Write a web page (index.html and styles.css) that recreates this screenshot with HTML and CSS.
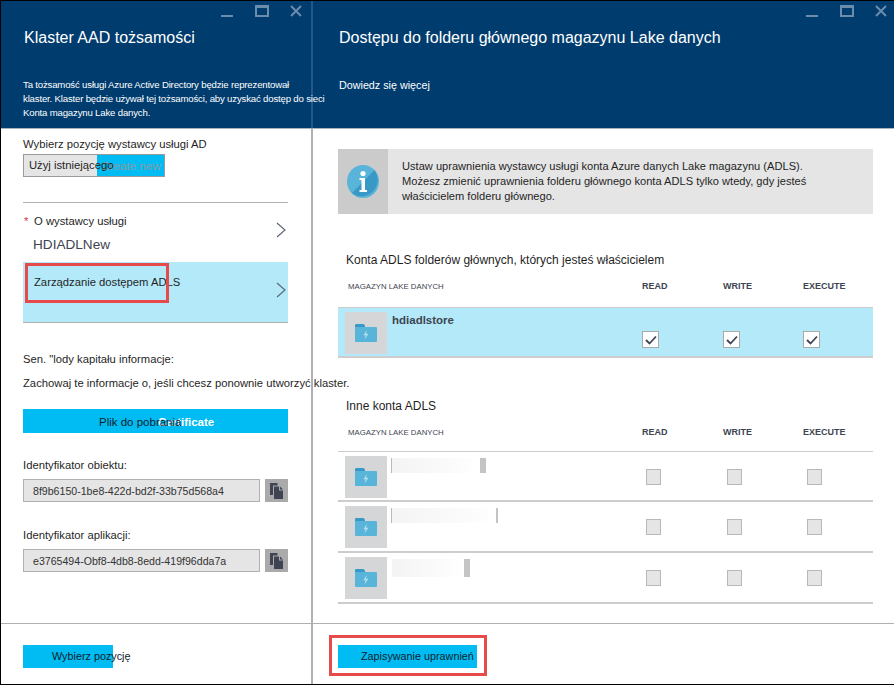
FILE: index.html
```html
<!DOCTYPE html>
<html lang="pl">

<head>
  <meta charset="UTF-8" />
  <title>Dostęp do folderu głównego</title>
  <link rel="stylesheet" href="styles.css">
</head>

<body>
  <svg class="defs" width="0" height="0" aria-hidden="true">
    <symbol id="folder" viewBox="0 0 22 18">
      <path d="M0 3V1.2Q0 0 1.2 0H8.5L10 1.5V3Z" fill="#3999c6" />
      <path d="M0 3H21Q22 3 22 4V17Q22 18 21 18H1Q0 18 0 17Z" fill="#59b4d9" />
      <path d="M11.8 6L8.4 11.3H10.6L9.6 15.5L13.4 9.8H11Z" fill="#b3def0" />
    </symbol>
    <symbol id="copy" viewBox="0 0 14 16">
      <path d="M0 0H7.5V2.5H3V12H0Z" fill="#3e4451" />
      <path d="M4 3.5H9V7.5H13V16H4Z" fill="#3e4451" />
      <path d="M10 3.5L13 6.5H10Z" fill="#3e4451" />
    </symbol>
    <symbol id="chevron" viewBox="0 0 10 16">
      <path d="M1 1L9 8L1 15" fill="none" stroke="#5a6472" stroke-width="1.1" />
    </symbol>
    <symbol id="tick" viewBox="0 0 12 10">
      <path d="M1 5L4.5 8.5L11 1.5" fill="none" stroke="#3e4451" stroke-width="1.8" />
    </symbol>
    <symbol id="close" viewBox="0 0 12 12">
      <path d="M1 1L11 11M11 1L1 11" fill="none" stroke="#6b8cab" stroke-width="2" />
    </symbol>
  </svg>

  <div class="frame">
    <section class="blade blade-left">
      <header class="blade-head">
        <div class="win-controls">
          <span class="win-min"></span>
          <span class="win-max"></span>
          <svg class="win-close"><use href="#close" /></svg>
        </div>
        <h1>Klaster AAD tożsamości</h1>
        <p class="head-note">Ta tożsamość usługi Azure Active Directory będzie reprezentował<br>klaster. Klaster będzie używał tej tożsamości, aby uzyskać dostęp do sieci<br>Konta magazynu Lake danych.</p>
      </header>
      <div class="blade-body">
        <p class="label label-first">Wybierz pozycję wystawcy usługi AD</p>
        <div class="toggle">
          <span class="toggle-on"><span class="toggle-text">Użyj istniejącego</span></span>
          <span class="toggle-off">Create new</span>
        </div>

        <div class="nav-row nav-first">
          <div>
            <p class="label"><span class="req">*</span>O wystawcy usługi</p>
            <p class="nav-value">HDIADLNew</p>
          </div>
          <svg class="chevron"><use href="#chevron" /></svg>
        </div>
        <div class="nav-row nav-active">
          <p class="label">Zarządzanie dostępem ADLS</p>
          <svg class="chevron"><use href="#chevron" /></svg>
          <span class="red-box red-adls"></span>
        </div>

        <p class="label secret-title">Sen. "lody kapitału informacje:</p>
        <p class="label secret-note">Zachowaj te informacje o, jeśli chcesz ponownie utworzyć klaster.</p>
        <div class="download">
          <span class="download-text">Plik do pobrania</span>
          <span class="download-cert">Certificate</span>
        </div>

        <p class="label id-label">Identyfikator obiektu:</p>
        <div class="id-row">
          <div class="id-value">8f9b6150-1be8-422d-bd2f-33b75d568a4</div>
          <button class="copy-btn"><svg><use href="#copy" /></svg></button>
        </div>
        <p class="label id-label id-second">Identyfikator aplikacji:</p>
        <div class="id-row">
          <div class="id-value">e3765494-Obf8-4db8-8edd-419f96dda7a</div>
          <button class="copy-btn"><svg><use href="#copy" /></svg></button>
        </div>
      </div>
      <footer class="blade-foot">
        <div class="action action-select">Wybierz pozycję</div>
      </footer>
    </section>

    <section class="blade blade-right">
      <header class="blade-head">
        <div class="win-controls">
          <span class="win-min"></span>
          <span class="win-max"></span>
          <svg class="win-close"><use href="#close" /></svg>
        </div>
        <h1>Dostępu do folderu głównego magazynu Lake danych</h1>
        <p class="head-note">Dowiedz się więcej</p>
      </header>
      <div class="blade-body">
        <div class="info">
          <div class="info-icon">
            <svg width="32" height="33" viewBox="0 0 32 33">
              <ellipse cx="16" cy="16.5" rx="16" ry="16.5" fill="#59b4d9" />
              <path d="M27.5 5A16 16.5 0 0 1 5 28Z" fill="#3999c6" />
              <circle cx="16" cy="8.5" r="2.6" fill="#fff" />
              <path d="M12.5 13H18V25H20V27H12.5V25H14.5V15H12.5Z" fill="#fff" />
            </svg>
          </div>
          <p>Ustaw uprawnienia wystawcy usługi konta Azure danych Lake magazynu (ADLS).<br>Możesz zmienić uprawnienia folderu głównego konta ADLS tylko wtedy, gdy jesteś<br>właścicielem folderu głównego.</p>
        </div>

        <h2 class="list-title">Konta ADLS folderów głównych, których jesteś właścicielem</h2>
        <div class="list-head">
          <span class="col-store">MAGAZYN LAKE DANYCH</span>
          <span>READ</span>
          <span>WRITE</span>
          <span>EXECUTE</span>
        </div>
        <div class="list-row row-active">
          <div class="store">
            <span class="thumb"><svg><use href="#folder" /></svg></span>
            <span class="store-name">hdiadlstore</span>
          </div>
          <span class="check"><svg><use href="#tick" /></svg></span>
          <span class="check"><svg><use href="#tick" /></svg></span>
          <span class="check"><svg><use href="#tick" /></svg></span>
        </div>

        <h2 class="list-title title-other">Inne konta ADLS</h2>
        <div class="list-head head-other">
          <span class="col-store">MAGAZYN LAKE DANYCH</span>
          <span>READ</span>
          <span>WRITE</span>
          <span>EXECUTE</span>
        </div>
        <div class="list-row row-first">
          <div class="store">
            <span class="thumb"><svg><use href="#folder" /></svg></span>
            <span class="blur blur-a"></span>
          </div>
          <span class="check check-off"></span>
          <span class="check check-off"></span>
          <span class="check check-off"></span>
        </div>
        <div class="list-row">
          <div class="store">
            <span class="thumb"><svg><use href="#folder" /></svg></span>
            <span class="blur blur-b"></span>
          </div>
          <span class="check check-off"></span>
          <span class="check check-off"></span>
          <span class="check check-off"></span>
        </div>
        <div class="list-row">
          <div class="store">
            <span class="thumb"><svg><use href="#folder" /></svg></span>
            <span class="blur blur-c"></span>
          </div>
          <span class="check check-off"></span>
          <span class="check check-off"></span>
          <span class="check check-off"></span>
        </div>
      </div>
      <footer class="blade-foot">
        <div class="action action-save">Zapisywanie uprawnień</div>
        <span class="red-box red-save"></span>
      </footer>
    </section>
  </div>
</body>

</html>
```

FILE: styles.css
```css
* {
  box-sizing: border-box;
}

html,
body {
  margin: 0;
  height: 100%;
}

body {
  font-family: "Liberation Sans", Arial, sans-serif;
  color: #1f1f1f;
  background: #fff;
  overflow: hidden;
}

p,
h1,
h2 {
  margin: 0;
  font-weight: normal;
}

svg {
  display: block;
}

.defs {
  position: absolute;
}

.frame {
  display: flex;
  width: 894px;
  height: 685px;
  border-top: 1px solid #000;
  border-left: 1px solid #000;
  border-bottom: 1px solid #000;
}

.blade {
  display: flex;
  flex-direction: column;
  position: relative;
}

.blade-left {
  width: 310px;
  z-index: 1;
}

.blade-right {
  flex: 1;
  min-width: 0;
  border-left: 2px solid #b0b0b0;
}

/* header */
.blade-head {
  position: relative;
  height: 128px;
  flex: none;
  background: #003c6e;
  color: #fff;
  border-bottom: 1px solid #a9b4be;
  padding: 0 0 0 22px;
}

.blade-right .blade-head {
  padding-left: 25px;
}

.blade-left .blade-head::after {
  content: "";
  position: absolute;
  top: 0;
  bottom: 0;
  right: -2px;
  width: 2px;
  background: #23588a;
  z-index: -1;
}

.blade-head h1 {
  font-size: 16px;
  line-height: 22px;
  padding: 26px 0 0 1px;
  white-space: nowrap;
}

.head-note {
  position: relative;
  margin-top: 29px;
  font-size: 9.6px;
  letter-spacing: -0.17px;
  line-height: 14px;
  white-space: nowrap;
  z-index: 2;
}

.blade-right .head-note {
  padding-left: 1px;
  font-size: 10.75px;
  letter-spacing: 0;
}

.win-controls {
  position: absolute;
  top: 4px;
  right: 7px;
  display: flex;
  align-items: flex-start;
}

.blade-left .win-controls {
  right: 9px;
}

.win-min {
  width: 12px;
  height: 2px;
  margin-top: 10px;
  background: #6b8cab;
}

.win-max {
  width: 14px;
  height: 12px;
  margin-left: 22px;
  border: 2px solid #6b8cab;
  border-top-width: 3px;
}

.win-close {
  width: 12px;
  height: 12px;
  margin-left: 21px;
}

/* left blade */
.blade-body {
  flex: 1;
  min-height: 0;
}

.blade-left .blade-body {
  padding: 0 22px;
}

.label {
  font-size: 11.25px;
  line-height: 15px;
  white-space: nowrap;
}

.label-first {
  padding-top: 8px;
}

.toggle {
  display: flex;
  width: 142px;
  height: 23px;
  margin-top: 2px;
  border: 1px solid #9b9b9b;
  font-size: 11.25px;
  line-height: 21px;
  white-space: nowrap;
}

.toggle-on {
  width: 73px;
  padding-left: 5px;
  background: #e5e5e5;
}

.toggle-text {
  position: relative;
  z-index: 1;
}

.toggle-off {
  flex: 1;
  padding-left: 4px;
  background: #00bcf2;
  color: #8a9aa5;
  font-size: 11.7px;
}

.nav-row {
  position: relative;
  width: 265px;
  padding-left: 11px;
}

.nav-first {
  margin-top: 25px;
  height: 60px;
  padding-top: 11px;
  border-top: 1px solid #b0b0b0;
}

.req {
  position: absolute;
  left: 1px;
  color: #d9343a;
}

.nav-value {
  margin: 7px 0 0 -1px;
  font-size: 13.6px;
  line-height: 17px;
  color: #3e4451;
}

.chevron {
  position: absolute;
  right: 2px;
  width: 10px;
  height: 16px;
  top: 19px;
}

.nav-active {
  height: 61px;
  padding-top: 13px;
  background: #b3e9f9;
  border-bottom: 1px solid #b0b0b0;
}

.nav-active .chevron {
  top: 20px;
}

.red-box {
  position: absolute;
  border: 3px solid #e64a4a;
}

.red-adls {
  left: 2px;
  top: 1px;
  width: 144px;
  height: 40px;
}

.secret-title {
  margin-top: 29px;
}

.secret-note {
  margin-top: 9px;
}

.download {
  display: grid;
  width: 265px;
  height: 24px;
  margin-top: 18px;
  background: #00bcf2;
  font-size: 11.5px;
  line-height: 26px;
  white-space: nowrap;
}

.download span {
  grid-area: 1 / 1;
}

.download-text {
  position: relative;
  z-index: 1;
  margin-left: 76px;
  color: #10222e;
}

.download-cert {
  margin-left: 135px;
  color: #fff;
  font-weight: bold;
}

.id-label {
  margin-top: 25px;
}

.id-second {
  margin-top: 26px;
}

.id-row {
  display: flex;
  gap: 5px;
  width: 265px;
  height: 23px;
  margin-top: 6px;
}

.id-value {
  flex: 1;
  padding-left: 9px;
  background: #e5e5e5;
  border: 1px solid #b0b0b0;
  font-size: 10.6px;
  line-height: 23px;
  color: #333;
  white-space: nowrap;
}

.copy-btn {
  width: 23px;
  padding: 0;
  border: 0;
  background: #aaa;
}

.copy-btn svg {
  width: 14px;
  height: 16px;
  margin: 0 auto;
}

/* footers */
.blade-foot {
  position: relative;
  height: 61px;
  flex: none;
  border-top: 1px solid #b0b0b0;
  padding-top: 21px;
}

.blade-left .blade-foot {
  padding-left: 22px;
}

.blade-right .blade-foot {
  padding-left: 25px;
}

.action {
  height: 23px;
  background: #00bcf2;
  font-size: 10.8px;
  line-height: 23px;
  color: #10222e;
  white-space: nowrap;
}

.action-select {
  width: 90px;
  padding-left: 29px;
}

.action-save {
  width: 139px;
  padding-left: 23px;
}

.red-save {
  left: 16px;
  top: 11px;
  width: 158px;
  height: 41px;
}

/* right blade */
.blade-right .blade-body {
  padding: 20px 21px 0 25px;
}

.info {
  display: flex;
  align-items: center;
  height: 65px;
  background: #e5e5e5;
}

.info-icon {
  display: flex;
  align-items: center;
  justify-content: center;
  width: 50px;
  height: 100%;
  background: #cbcbcb;
}

.info p {
  padding-left: 14px;
  font-size: 11.1px;
  line-height: 15px;
  white-space: nowrap;
}

.list-title {
  margin: 39px 0 0 8px;
  font-size: 12px;
  line-height: 15px;
}

.title-other {
  margin-top: 41px;
}

.list-head,
.list-row {
  display: grid;
  grid-template-columns: 304px 81px 80px 70px;
}

.list-head {
  height: 39px;
  padding-top: 11px;
  align-items: start;
  font-size: 9px;
  font-weight: bold;
  line-height: 15px;
  color: #3e4451;
}

.head-other {
  height: 38px;
}

.list-head .col-store {
  padding-left: 10px;
  font-size: 7.8px;
  font-weight: normal;
  white-space: nowrap;
}

.list-row {
  height: 51px;
  align-items: start;
  border-bottom: 2px solid #cdcdcd;
}

.row-active {
  background: #b3e9f9;
  border-top: 1px solid #ccc;
}

.row-first {
  border-top: 1px solid #ccc;
  margin-top: -1px;
}

.store {
  display: flex;
  align-items: flex-start;
  gap: 5px;
  padding: 4px 0 0 7px;
}

.thumb {
  display: flex;
  align-items: center;
  justify-content: center;
  flex: none;
  width: 42px;
  height: 42px;
  background: #d4d6d8;
}

.thumb svg {
  width: 22px;
  height: 18px;
}

.store-name {
  margin-top: -1px;
  font-size: 11.5px;
  font-weight: bold;
  line-height: 18px;
  color: #3e4451;
}

.check {
  display: flex;
  align-items: center;
  justify-content: center;
  width: 17px;
  height: 17px;
  margin-top: 23px;
  background: #fff;
  border: 1px solid #aaa;
}

.check svg {
  width: 12px;
  height: 10px;
}

.check-off {
  width: 15px;
  height: 16px;
  margin: 17px 0 0 4px;
  background: #e5e5e5;
  border: 1px solid #b8b8b8;
}

.blur {
  height: 15px;
  margin-top: 2px;
  background: linear-gradient(90deg, #f4f4f4, #fafafa 60%, #fff);
}

.blur-a {
  width: 95px;
  margin-left: -1px;
  border-left: 1px solid #bbb;
  border-right: 6px solid #c4c4c4;
}

.blur-b {
  width: 107px;
  margin-left: -1px;
  border-left: 1px solid #bbb;
  border-right: 2px solid #c4c4c4;
}

.blur-c {
  width: 78px;
  height: 18px;
  border-right: 6px solid #c4c4c4;
}
```
